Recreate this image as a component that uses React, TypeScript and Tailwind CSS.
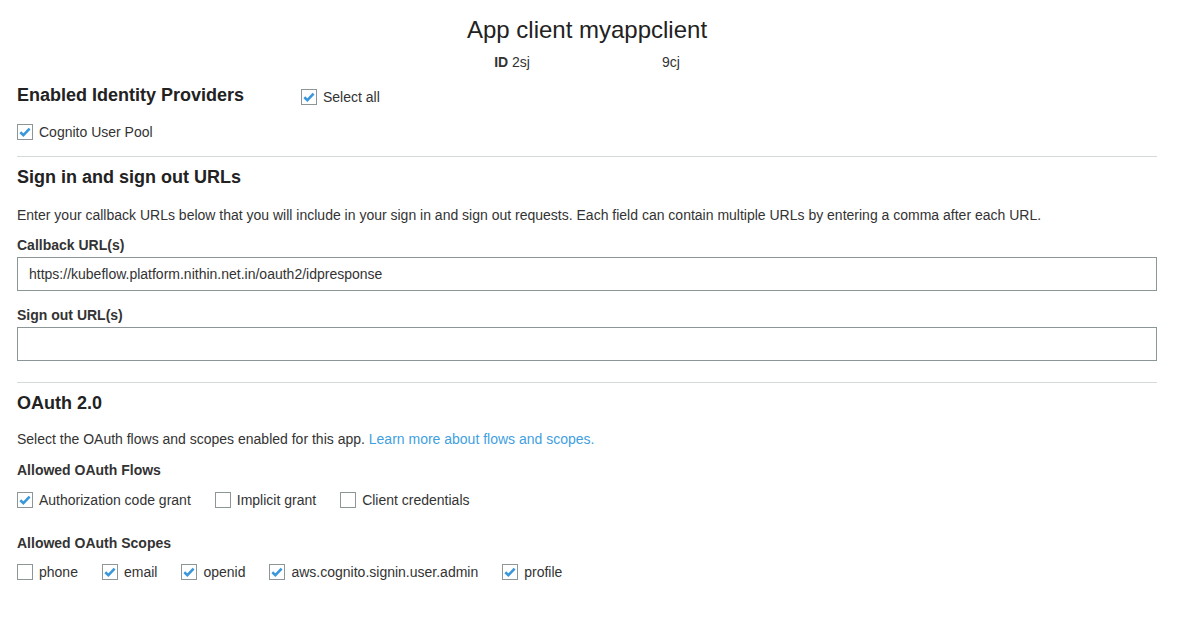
import React from "react";

function Check({ checked, label }: { checked: boolean; label: string }) {
  return (
    <label className="inline-flex items-center gap-[6px]">
      <span className="relative inline-flex h-[16px] w-[16px] shrink-0 items-center justify-center border border-[#8d9696] bg-white self-center">
        {checked && (
          <svg width="14" height="14" viewBox="0 0 14 14" className="block">
            <path d="M2.3 7.2 L5.4 10.2 L11.6 3.6" fill="none" stroke="#3b98dc" strokeWidth="2.6" strokeLinecap="butt" strokeLinejoin="miter" />
          </svg>
        )}
      </span>
      <span>{label}</span>
    </label>
  );
}

export default function App() {
  return (
    <div className="min-h-[620px] w-full bg-white pl-[17px] pr-[20px] text-[14px] leading-[20px] text-[#333]" style={{ fontFamily: '"Liberation Sans", Arial, sans-serif' }}>
      <div className="pt-[16px] text-center text-[24px] leading-[28px] text-[#222]">App client myappclient</div>
      <div className="mt-[8px] flex justify-center text-[14px] leading-[20px]">
        <span>
          <b>ID</b> 2sj
        </span>
        <span className="ml-[132px]">9cj</span>
      </div>

      <div className="mt-[11px] flex items-start">
        <h2 className="w-[284px] text-[18px] leading-[24px] font-bold text-[#222]">Enabled Identity Providers</h2>
        <div className="mt-[4px]">
          <Check checked label="Select all" />
        </div>
      </div>
      <div className="mt-[13px]">
        <Check checked label="Cognito User Pool" />
      </div>

      <div className="mt-[12px] h-px bg-[#d5d9d9]" />

      <h2 className="mt-[8px] text-[18px] leading-[24px] font-bold text-[#222]">Sign in and sign out URLs</h2>
      <p className="mt-[16px]">
        Enter your callback URLs below that you will include in your sign in and sign out requests. Each field can contain multiple URLs by entering a comma after each URL.
      </p>
      <div className="mt-[10px] font-bold">Callback URL(s)</div>
      <div className="mt-[2px] flex h-[34px] items-center border border-[#8d9696] px-[11px]">
        https://kubeflow.platform.nithin.net.in/oauth2/idpresponse
      </div>
      <div className="mt-[14px] font-bold">Sign out URL(s)</div>
      <div className="mt-[2px] h-[34px] border border-[#8d9696]" />

      <div className="mt-[21px] h-px bg-[#d5d9d9]" />

      <h2 className="mt-[8px] text-[18px] leading-[24px] font-bold text-[#222]">OAuth 2.0</h2>
      <p className="mt-[14px]">
        Select the OAuth flows and scopes enabled for this app. <span className="text-[#3f9fe0]">Learn more about flows and scopes.</span>
      </p>
      <div className="mt-[11px] font-bold">Allowed OAuth Flows</div>
      <div className="mt-[10px] flex gap-[24px]">
        <Check checked label="Authorization code grant" />
        <Check checked={false} label="Implicit grant" />
        <Check checked={false} label="Client credentials" />
      </div>
      <div className="mt-[23px] font-bold">Allowed OAuth Scopes</div>
      <div className="mt-[9px] flex gap-[24px]">
        <Check checked={false} label="phone" />
        <Check checked label="email" />
        <Check checked label="openid" />
        <Check checked label="aws.cognito.signin.user.admin" />
        <Check checked label="profile" />
      </div>
    </div>
  );
}
